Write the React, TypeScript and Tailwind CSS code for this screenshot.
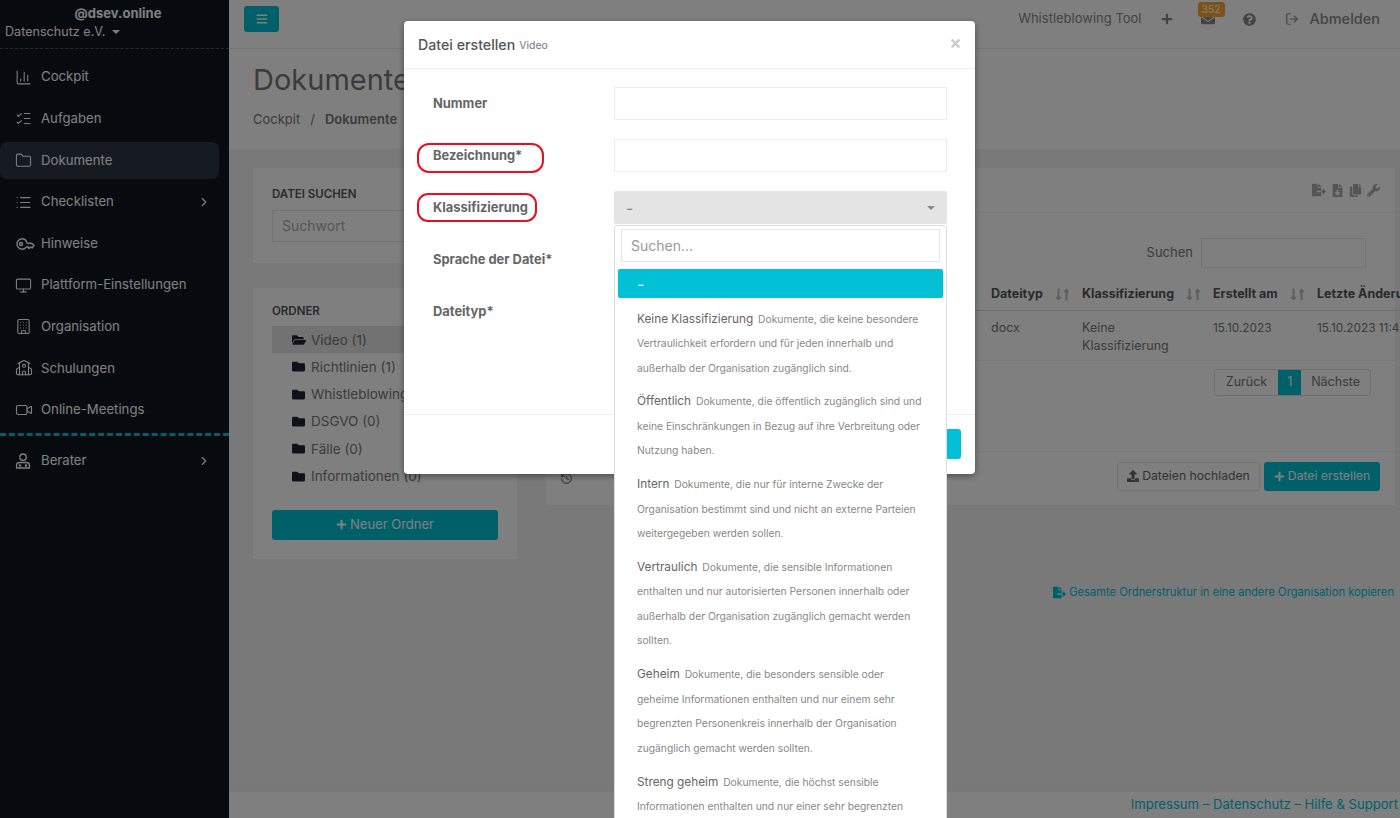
import { ChartColumn, ChevronRight, Building, Folder, History, ListChecks, List, Monitor, School, Video } from 'lucide-react'
import {
  FaBars,
  FaCopy,
  FaEnvelope,
  FaFileDownload,
  FaFileExport,
  FaFolder,
  FaFolderOpen,
  FaLongArrowAltDown,
  FaLongArrowAltUp,
  FaPlus,
  FaQuestionCircle,
  FaTimes,
  FaUpload,
  FaWrench,
} from 'react-icons/fa'
import { FiLogOut } from 'react-icons/fi'

function KeyIcon() {
  return (
    <svg width="20" height="16" viewBox="0 0 20 16" fill="none" stroke="currentColor" strokeWidth="1.4">
      <path d="M11 4.5 A5.2 5.2 0 1 0 11 11.5 L12.5 10.5 L14 12.5 L15.5 11 L17 12 L19 9.5 L17 7.5 L12 7 Z" strokeLinejoin="round" />
      <circle cx="6" cy="8" r="1.5" />
    </svg>
  )
}

function AdvisorIcon() {
  return (
    <svg width="16" height="16" viewBox="0 0 16 16" fill="none" stroke="currentColor" strokeWidth="1.3">
      <circle cx="8" cy="4.2" r="3.2" />
      <path d="M1.5 15 v-2.5 a3 3 0 0 1 3-3 h7 a3 3 0 0 1 3 3 V15 Z" strokeLinejoin="round" />
      <circle cx="5" cy="12.5" r="0.6" />
      <circle cx="11" cy="12.5" r="0.6" />
    </svg>
  )
}

const navItems = [
  { label: 'Cockpit', icon: <ChartColumn size={17} strokeWidth={1.5} /> },
  { label: 'Aufgaben', icon: <ListChecks size={17} strokeWidth={1.5} /> },
  { label: 'Dokumente', icon: <Folder size={17} strokeWidth={1.5} />, active: true },
  { label: 'Checklisten', icon: <List size={17} strokeWidth={1.7} />, arrow: true },
  { label: 'Hinweise', icon: <KeyIcon /> },
  { label: 'Plattform-Einstellungen', icon: <Monitor size={17} strokeWidth={1.5} /> },
  { label: 'Organisation', icon: <Building size={17} strokeWidth={1.5} /> },
  { label: 'Schulungen', icon: <School size={18} strokeWidth={1.5} /> },
  { label: 'Online-Meetings', icon: <Video size={18} strokeWidth={1.5} /> },
]

const folders = [
  { name: 'Video (1)', open: true },
  { name: 'Richtlinien (1)' },
  { name: 'Whistleblowing (0)' },
  { name: 'DSGVO (0)' },
  { name: 'Fälle (0)' },
  { name: 'Informationen (0)' },
]

const options = [
  { title: 'Keine Klassifizierung', desc: 'Dokumente, die keine besondere Vertraulichkeit erfordern und für jeden innerhalb und außerhalb der Organisation zugänglich sind.' },
  { title: 'Öffentlich', desc: 'Dokumente, die öffentlich zugänglich sind und keine Einschränkungen in Bezug auf ihre Verbreitung oder Nutzung haben.' },
  { title: 'Intern', desc: 'Dokumente, die nur für interne Zwecke der Organisation bestimmt sind und nicht an externe Parteien weitergegeben werden sollen.' },
  { title: 'Vertraulich', desc: 'Dokumente, die sensible Informationen enthalten und nur autorisierten Personen innerhalb oder außerhalb der Organisation zugänglich gemacht werden sollten.' },
  { title: 'Geheim', desc: 'Dokumente, die besonders sensible oder geheime Informationen enthalten und nur einem sehr begrenzten Personenkreis innerhalb der Organisation zugänglich gemacht werden sollten.' },
  { title: 'Streng geheim', desc: 'Dokumente, die höchst sensible Informationen enthalten und nur einer sehr begrenzten Anzahl von Personen zugänglich sind.' },
]

const formRows = ['Nummer', 'Bezeichnung*', 'Klassifizierung', 'Sprache der Datei*', 'Dateityp*']

function SortHead({ label }: { label: string }) {
  return (
    <div className="flex items-center gap-[9px] font-bold text-[#555]">
      <span>{label}</span>
      <span className="flex text-[13px] text-[#bbb]">
        <FaLongArrowAltDown className="-mr-[5px]" />
        <FaLongArrowAltUp />
      </span>
    </div>
  )
}

function Sidebar() {
  return (
    <aside className="flex w-[229px] shrink-0 flex-col bg-[#0e1621] text-[13.2px] text-white">
      <div className="h-[49px] border-b border-dashed border-[#555] pl-[5px] pt-[4px]">
        <div className="pl-[2px] text-center text-[13px] leading-[18px] font-bold">@dsev.online</div>
        <div className="mt-[1px] flex items-center gap-[7px] text-[12.6px] leading-[18px]">
          Datenschutz e.V.
          <span className="h-0 w-0 border-x-[4px] border-t-[4px] border-x-transparent border-t-white" />
        </div>
      </div>
      <nav className="pt-[7.5px]">
        {navItems.map((item) => (
          <div key={item.label} className="h-[41.6px] py-[2.3px] pr-[10px]">
            <div className={`flex h-[37px] items-center rounded-[7px] pr-[8px] pl-[15px] ${item.active ? 'bg-[#2c3442]' : ''}`}>
              <span className="flex w-[26px] shrink-0">{item.icon}</span>
              <span className="flex-1 whitespace-nowrap">{item.label}</span>
              {item.arrow && <ChevronRight size={14} />}
            </div>
          </div>
        ))}
      </nav>
      <div className="mt-[2.5px] border-t-[3px] border-dashed border-[#00c1d4]" />
      <div className="mt-[6px] mr-[10px] flex h-[37px] items-center pr-[8px] pl-[15px]">
        <span className="flex w-[26px] shrink-0"><AdvisorIcon /></span>
        <span className="flex-1">Berater</span>
        <ChevronRight size={14} />
      </div>
    </aside>
  )
}

function TopBar() {
  return (
    <header className="flex h-[49px] shrink-0 items-start border-b border-[#eee] bg-white pt-[6px] pr-[20px] pl-[15px] text-[#888]">
      <button className="flex h-[26px] w-[35px] items-center justify-center rounded-[3px] bg-[#00c1d4] text-white">
        <FaBars size={12} />
      </button>
      <div className="ml-auto flex h-[26px] items-center">
        <span className="text-[13px]">Whistleblowing Tool</span>
        <FaPlus size={12} className="ml-[19px]" />
        <span className="relative ml-[28px] flex">
          <FaEnvelope size={14} />
          <span className="absolute -top-[10px] -left-[3px] rounded-[3px] bg-[#f8a532] px-[4px] text-[10.5px] leading-[15px] text-white">352</span>
        </span>
        <FaQuestionCircle size={13} className="ml-[28px]" />
        <FiLogOut size={14} className="ml-[29px]" />
        <span className="ml-[11px] text-[14.5px] font-medium">Abmelden</span>
      </div>
    </header>
  )
}

function LeftColumn() {
  return (
    <div className="flex w-[264px] shrink-0 flex-col gap-[25px]">
      <section className="h-[95px] bg-white px-[19px] pt-[18px]">
        <h4 className="text-[11.5px] leading-[16px] font-semibold text-[#555]">DATEI SUCHEN</h4>
        <div className="mt-[8px] flex h-[32px] items-center border border-[#e6e6e6] px-[9px] pb-[2px] text-[14px] text-[#aaa]">Suchwort</div>
      </section>
      <section className="h-[271px] bg-white px-[19px] pt-[15px]">
        <h4 className="text-[11.5px] leading-[16px] font-semibold text-[#555]">ORDNER</h4>
        <ul className="mt-[7px] text-[13.5px] text-[#777]">
          {folders.map((f) => (
            <li key={f.name} className={`flex h-[27.3px] items-center pl-[20px] ${f.open ? 'bg-[#e4e4e4]' : ''}`}>
              {f.open ? <FaFolderOpen size={14} className="mr-[5px] text-[#223]" /> : <FaFolder size={13} className="mr-[6px] text-[#223]" />}
              {f.name}
            </li>
          ))}
        </ul>
        <button className="mt-[20px] flex h-[30px] w-full items-center justify-center gap-[3px] rounded-[3px] bg-[#00c1d4] text-[13px] text-white">
          <FaPlus size={11} />
          Neuer Ordner
        </button>
      </section>
    </div>
  )
}

function RightColumn() {
  return (
    <div className="w-[849px] shrink-0">
      <section className="h-[337px] bg-white text-[12.5px] text-[#777]">
        <div className="flex h-[45px] items-center justify-end gap-[5px] border-b border-[#eee] pr-[15px] text-[14px] text-[#aaa]">
          <FaFileExport />
          <FaFileDownload size={13} />
          <FaCopy size={13} />
          <FaWrench size={13} />
        </div>
        <div className="mt-[25px] flex items-center justify-end pr-[29px]">
          <span className="mr-[8px] text-[13px]">Suchen</span>
          <div className="h-[30px] w-[165px] border border-[#e6e6e6]" />
        </div>
        <div className="mt-[11px] grid h-[32px] w-[900px] grid-cols-[445px_91px_131px_104px_1fr] items-center border-b border-[#ddd] text-[12.5px]">
          <span />
          <SortHead label="Dateityp" />
          <SortHead label="Klassifizierung" />
          <SortHead label="Erstellt am" />
          <span className="font-bold whitespace-nowrap text-[#555]">Letzte Änderung</span>
        </div>
        <div className="grid h-[50px] w-[900px] grid-cols-[445px_91px_131px_104px_1fr] border-b border-[#f2f2f2] pt-[8px] leading-[18px]">
          <span />
          <span>docx</span>
          <span className="w-[90px]">Keine Klassifizierung</span>
          <span className="text-[11.8px]">15.10.2023</span>
          <span className="text-[11.8px] whitespace-nowrap">15.10.2023 11:40</span>
        </div>
        <div className="mt-[8px] mr-[24px] flex justify-end">
          <div className="flex h-[27px] items-center overflow-hidden rounded-[3px] border border-[#ddd]">
            <span className="px-[11px]">Zurück</span>
            <span className="flex h-full w-[23px] items-center justify-center bg-[#00c1d4] text-white">1</span>
            <span className="px-[10px]">Nächste</span>
          </div>
        </div>
        <div className="mt-[55px] flex h-[53px] items-center justify-between border-t border-[#eee] pr-[15px] pl-[14px]">
          <History size={13} />
          <div className="mb-[4px] flex gap-[4px] text-[12.2px]">
            <button className="flex h-[29px] w-[143px] items-center justify-center gap-[3px] rounded-[3px] border border-[#e4e4e4] text-[#666]">
              <FaUpload size={12} />
              Dateien hochladen
            </button>
            <button className="flex h-[29px] w-[116px] items-center justify-center gap-[3px] rounded-[3px] bg-[#00c1d4] text-white">
              <FaPlus size={11} />
              Datei erstellen
            </button>
          </div>
        </div>
      </section>
      <div className="mt-[79px] flex items-center justify-end gap-[3px] pr-[1px] text-[11.2px] text-[#00c1d4]">
        <FaFileExport size={13} />
        Gesamte Ordnerstruktur in eine andere Organisation kopieren
      </div>
    </div>
  )
}

function Dropdown() {
  return (
    <div className="absolute top-[204px] left-[210px] h-[700px] w-[333px] rounded-[3px] border border-[#ddd] bg-white px-[3px] pt-[3px]">
      <div className="mx-[3px] flex h-[33px] items-center border border-[#e6e6e6] px-[9px] text-[14px] text-[#999]">Suchen...</div>
      <div className="mt-[7px] flex h-[29px] items-center rounded-[2px] bg-[#02c0d6] pl-[19px] text-white">-</div>
      <div className="mt-[4px] text-[#888]">
        {options.map((o) => (
          <div key={o.title} className="px-[19px] py-[4.65px] text-[10.3px] leading-[24.5px]">
            <span className="mr-[2px] text-[11.8px] text-[#666]">{o.title}</span> {o.desc}
          </div>
        ))}
      </div>
    </div>
  )
}

function Modal() {
  return (
    <div className="absolute top-[21px] left-[404px] h-[453px] w-[571px] rounded-[4px] bg-white text-[#666] shadow-[0_2px_6px_rgba(0,0,0,0.4)]">
      <div className="flex h-[48px] items-center border-b border-[#eee] pr-[13px] pl-[14px]">
        <span className="text-[14.2px] font-medium text-[#555]">Datei erstellen</span>
        <span className="mt-[2px] ml-[4px] text-[10.5px] text-[#777]">Video</span>
        <FaTimes size={13} className="-mt-[2px] ml-auto text-[#ccc]" />
      </div>
      <div className="h-[346px] border-b border-[#eee] pt-[18px] pl-[29px]">
        <div className="flex flex-col gap-[19px]">
          {formRows.map((label, i) => (
            <div key={label} className="grid h-[33px] grid-cols-[181px_333px] items-center">
              <span className="text-[12.9px] font-bold text-[#666]">{label}</span>
              {i < 2 && <div className="h-[33px] border border-[#ececec]" />}
              {i === 2 && (
                <div className="flex h-[33px] items-center justify-between rounded-[2px] bg-[#e4e4e4] px-[12px] text-[#888]">
                  -
                  <span className="h-0 w-0 border-x-[4px] border-t-[4px] border-x-transparent border-t-[#888]" />
                </div>
              )}
            </div>
          ))}
        </div>
      </div>
      <div className="flex justify-end pt-[14px] pr-[14px]">
        <div className="h-[30px] w-[100px] rounded-[3px] bg-[#02c0d6]" />
      </div>
      <div className="absolute top-[122px] left-[13px] h-[30px] w-[127px] rounded-[12px] border-[2px] border-[#e8101e]" />
      <div className="absolute top-[172px] left-[13px] h-[29px] w-[120px] rounded-[11px] border-[2px] border-[#e8101e]" />
      <Dropdown />
    </div>
  )
}

export default function App() {
  return (
    <div className="relative flex h-[818px] w-[1400px] overflow-hidden bg-[#f3f3f3] font-['Inter',sans-serif]">
      <Sidebar />
      <div className="flex min-w-0 flex-1 flex-col">
        <TopBar />
        <div className="h-[100px] shrink-0 bg-white pt-[13px] pl-[24px]">
          <h1 className="text-[29px] leading-[36px] font-normal text-[#777]">Dokumente</h1>
          <div className="mt-[12px] flex text-[13px] text-[#777]">
            Cockpit <span className="mx-[10px]">/</span> <span className="font-semibold">Dokumente</span>
          </div>
        </div>
        <div className="flex flex-1 gap-[29px] pt-[19px] pl-[24px]">
          <LeftColumn />
          <RightColumn />
        </div>
        <footer className="flex h-[27px] shrink-0 items-center justify-end border-t border-[#eee] bg-white pr-[2px] text-[13.1px] text-[#00c1d4]">
          Impressum – Datenschutz – Hilfe &amp; Support
        </footer>
      </div>
      <div className="absolute inset-0 bg-black/50" />
      <Modal />
    </div>
  )
}
